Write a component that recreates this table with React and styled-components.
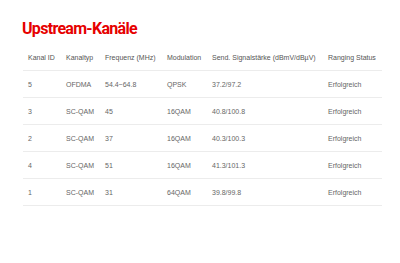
import React from "react";
import styled, { createGlobalStyle } from "styled-components";

const channels = [
  { id: "5", type: "OFDMA", freq: "54.4~64.8", mod: "QPSK", level: "37.2/97.2", status: "Erfolgreich" },
  { id: "3", type: "SC-QAM", freq: "45", mod: "16QAM", level: "40.8/100.8", status: "Erfolgreich" },
  { id: "2", type: "SC-QAM", freq: "37", mod: "16QAM", level: "40.3/100.3", status: "Erfolgreich" },
  { id: "4", type: "SC-QAM", freq: "51", mod: "16QAM", level: "41.3/101.3", status: "Erfolgreich" },
  { id: "1", type: "SC-QAM", freq: "31", mod: "64QAM", level: "39.8/99.8", status: "Erfolgreich" }
];

const columns = [
  { label: "Kanal ID", width: 38 },
  { label: "Kanaltyp", width: 39 },
  { label: "Frequenz (MHz)", width: 62 },
  { label: "Modulation", width: 45 },
  { label: "Send. Signalstärke (dBmV/dBµV)", width: 116 },
  { label: "Ranging Status", width: 59 }
];

export default function App() {
  return (
    <>
      <GlobalStyle />
      <Page>
        <Title>Upstream-Kanäle</Title>
        <Table>
          <colgroup>
            {columns.map((c) => (
              <col key={c.label} style={{ width: c.width }} />
            ))}
          </colgroup>
          <thead>
            <tr>
              {columns.map((c) => (
                <Th key={c.label}>{c.label}</Th>
              ))}
            </tr>
          </thead>
          <tbody>
            {channels.map((ch) => (
              <tr key={ch.id}>
                <Td>{ch.id}</Td>
                <Td>{ch.type}</Td>
                <Td>{ch.freq}</Td>
                <Td>{ch.mod}</Td>
                <Td>{ch.level}</Td>
                <Td>{ch.status}</Td>
              </tr>
            ))}
          </tbody>
        </Table>
      </Page>
    </>
  );
}

const GlobalStyle = createGlobalStyle`
  html, body {
    margin: 0;
    background: #fff;
  }
`;

const Page = styled.div`
  width: 400px;
  height: 263px;
  padding: 19px 18px 0 23px;
  box-sizing: border-box;
  font-family: "Liberation Sans", Arial, sans-serif;
`;

const Title = styled.h2`
  margin: 0 0 5px -1px;
  font-family: Roboto, "Liberation Sans", sans-serif;
  font-weight: 700;
  font-size: 16px;
  line-height: 20px;
  color: #e60000;
  letter-spacing: -0.7px;
`;

const Table = styled.table`
  width: 359px;
  border-collapse: collapse;
  table-layout: fixed;
`;

const Th = styled.th`
  height: 26px;
  padding: 0 0 0 5px;
  text-align: left;
  font-weight: 400;
  font-size: 7px;
  color: #555;
  white-space: nowrap;
  border-bottom: 1px solid #ececec;
`;

const Td = styled.td`
  height: 26px;
  padding: 0 0 0 5px;
  font-size: 7px;
  color: #666;
  white-space: nowrap;
  border-bottom: 1px solid #ececec;
`;
